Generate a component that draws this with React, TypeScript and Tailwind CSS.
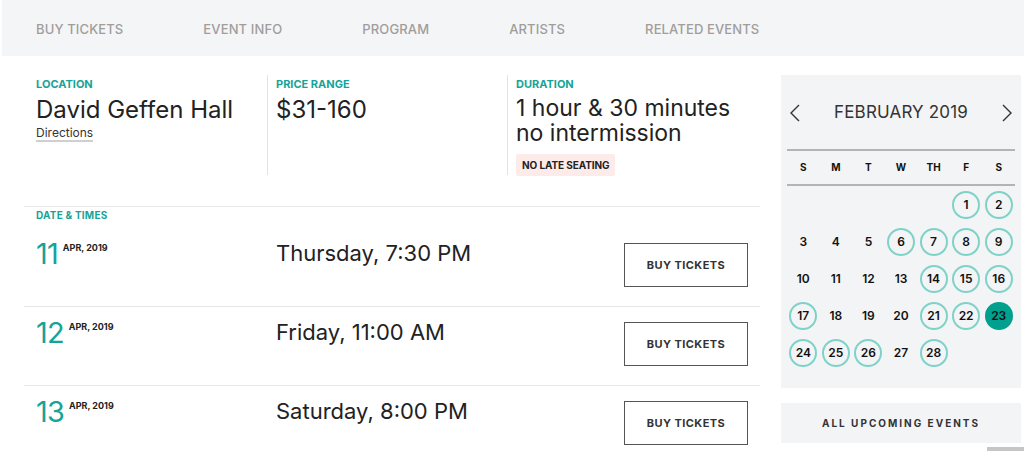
import React from "react";

const teal = "text-[#17a398]";

function Chevron({ dir }: { dir: "left" | "right" }) {
  return (
    <svg width="12" height="20" viewBox="0 0 12 20" fill="none" stroke="#333" strokeWidth="1.4">
      {dir === "left" ? <path d="M10 2 L2 10 L10 18" /> : <path d="M2 2 L10 10 L2 18" />}
    </svg>
  );
}

const circled = new Set([1, 2, 6, 7, 8, 9, 14, 15, 16, 17, 21, 22, 24, 25, 26, 28]);

function Calendar() {
  const cells: (number | null)[] = [null, null, null, null, null, 1, 2];
  for (let d = 3; d <= 28; d++) cells.push(d);
  return (
    <div className="bg-[#f3f4f6] h-[313px] px-[6px] pt-[24px]">
      <div className="flex items-center justify-between h-[28px] px-[2px]">
        <Chevron dir="left" />
        <div className="text-[17px] text-[#333] tracking-[0.01em]">FEBRUARY 2019</div>
        <Chevron dir="right" />
      </div>
      <div className="mt-[22px] border-t-2 border-b-2 border-[#b4b4b4] h-[37px] grid grid-cols-7 items-center">
        {["S", "M", "T", "W", "TH", "F", "S"].map((d, i) => (
          <div key={i} className="text-center text-[10px] font-bold text-[#111]">
            {d}
          </div>
        ))}
      </div>
      <div className="grid grid-cols-7">
        {cells.map((d, i) => (
          <div key={i} className="h-[37px] flex items-center justify-center">
            {d !== null && (
              <div
                className={
                  "w-[28px] h-[28px] rounded-full flex items-center justify-center text-[12px] font-semibold " +
                  (d === 23
                    ? "bg-[#00a08f] text-[#111]"
                    : circled.has(d)
                    ? "border-2 border-[#7fd2c8] text-[#111]"
                    : "text-[#111]")
                }
              >
                {d}
              </div>
            )}
          </div>
        ))}
      </div>
    </div>
  );
}

function DateRow({ day, time, first }: { day: string; time: string; first?: boolean }) {
  return (
    <div
      className={
        "flex items-start pl-[12px] pr-[12px] pb-[19px] border-b border-[#e6e6e6] " +
        (first ? "pt-[22px]" : "pt-[15px]")
      }
    >
      <div className="w-[240px] flex items-start">
        <div className={"text-[29px] leading-[28px] font-normal tracking-[-0.03em] mt-[-3px] " + teal}>{day}</div>
        <div className="ml-[5px] mt-[-2px] text-[9px] font-bold text-[#222]">APR, 2019</div>
      </div>
      <div className="flex-1 text-[22px] leading-[28px] text-[#222] mt-[-4px]">{time}</div>
      <button className="w-[124px] h-[44px] border border-[#555] text-[11px] font-bold tracking-[0.04em] text-[#333] bg-white">
        BUY TICKETS
      </button>
    </div>
  );
}

export default function App() {
  return (
    <div className="relative w-[1024px] h-[451px] overflow-hidden bg-white font-['Inter','Noto_Sans',sans-serif]">
      <nav className="ml-[2px] h-[56px] pt-[4px] bg-[#f4f5f7] flex items-center pl-[34px] gap-[80px] text-[13px] font-medium text-[#a09d9b] tracking-[0.01em]">
        <span>BUY TICKETS</span>
        <span>EVENT INFO</span>
        <span>PROGRAM</span>
        <span>ARTISTS</span>
        <span>RELATED EVENTS</span>
      </nav>
      <div className="flex pl-[24px] pt-[19px]">
        <div className="w-[736px]">
          <div className="h-[132px] pl-[12px] border-b border-[#e9e9e9] flex items-start">
            <div className="w-[232px] h-[100px] border-r border-[#e3e3e3] pt-[2px]">
              <div className={"text-[11px] leading-[14px] font-bold " + teal}>LOCATION</div>
              <div className="mt-[6px] text-[24px] leading-[26px] text-[#222]">David Geffen Hall</div>
              <div className="mt-[3px] w-fit text-[12px] leading-[14px] text-[#333] border-b-2 border-[#cfcfcf]">
                Directions
              </div>
            </div>
            <div className="w-[240px] h-[100px] border-r border-[#e3e3e3] pl-[8px] pt-[2px]">
              <div className={"text-[11px] leading-[14px] font-bold " + teal}>PRICE RANGE</div>
              <div className="mt-[6px] text-[24px] leading-[26px] text-[#222]">$31-160</div>
            </div>
            <div className="pl-[8px] pt-[2px]">
              <div className={"text-[11px] leading-[14px] font-bold " + teal}>DURATION</div>
              <div className="mt-[5px] text-[23px] leading-[25px] text-[#222]">
                <div>1 hour &amp; 30 minutes</div>
                <div>no intermission</div>
              </div>
              <div className="mt-[8px] w-fit flex items-center h-[22px] px-[6px] rounded-[2px] bg-[#fdebea] text-[10px] font-bold text-[#222] tracking-[-0.01em]">
                NO LATE SEATING
              </div>
            </div>
          </div>
          <div>
            <div className={"pl-[12px] pt-[2px] text-[10px] leading-[12px] font-bold tracking-[0.02em] " + teal}>
              DATE &amp; TIMES
            </div>
            <DateRow day="11" time="Thursday, 7:30 PM" first />
            <DateRow day="12" time="Friday, 11:00 AM" />
            <DateRow day="13" time="Saturday, 8:00 PM" />
          </div>
        </div>
        <div className="ml-[21px] w-[240px]">
          <Calendar />
          <div className="mt-[15px] h-[40px] bg-[#f3f4f6] flex items-center justify-center text-[10px] font-bold tracking-[0.2em] text-[#333]">
            ALL UPCOMING EVENTS
          </div>
        </div>
      </div>
      <div className="absolute right-0 bottom-0 w-[37px] h-[4px] bg-[#c6c6c6]" />
    </div>
  );
}
